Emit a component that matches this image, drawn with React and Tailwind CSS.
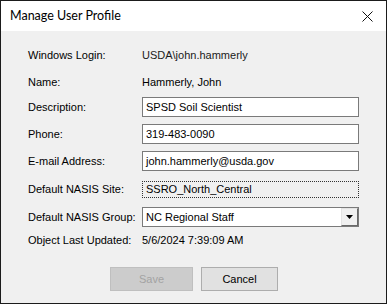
export default function App() {
  const label = 'w-[141px] shrink-0 pl-[27px] whitespace-nowrap'
  const input = 'flex-none w-[217px] h-[20px] border border-[#7a7a7a] bg-white px-[3px] flex items-center whitespace-nowrap'

  return (
    <div className="w-[387px] h-[304px] border border-[#1b1b1b] bg-[#f0f0f0] flex flex-col text-[11px] text-black font-['Liberation_Sans',Arial,sans-serif] leading-none">
      {/* title bar */}
      <div className="h-[30px] bg-white flex items-center justify-between pl-[9px] pr-[13px] shrink-0">
        <span className="text-[12.5px] font-['Lato','Noto_Sans',sans-serif] text-black">Manage User Profile</span>
        <svg width="11" height="11" viewBox="0 0 11 11" className="mt-[1px]">
          <path d="M0.5 0.5 L10.5 10.5 M10.5 0.5 L0.5 10.5" stroke="#111" strokeWidth="1" fill="none" />
        </svg>
      </div>

      <div className="flex flex-col">
        <div className="flex items-center h-[20px] mt-[14px]">
          <span className={label}>Windows Login:</span>
          <span className="text-[#1a1a1a]">USDA\john.hammerly</span>
        </div>
        <div className="flex items-center h-[20px] mt-[7px]">
          <span className={label}>Name:</span>
          <span>Hammerly, John</span>
        </div>
        <div className="flex items-center h-[20px] mt-[5px]">
          <span className={label}>Description:</span>
          <div className={input}>SPSD Soil Scientist</div>
        </div>
        <div className="flex items-center h-[20px] mt-[7px]">
          <span className={label}>Phone:</span>
          <div className={input}>319-483-0090</div>
        </div>
        <div className="flex items-center h-[20px] mt-[7px]">
          <span className={label}>E-mail Address:</span>
          <div className={input}>john.hammerly@usda.gov</div>
        </div>
        <div className="flex items-center h-[18px] mt-[9px]">
          <span className={label}>Default NASIS Site:</span>
          <div className="flex-none w-[217px] h-[17px] border border-dotted border-[#333] px-[3px] flex items-center">
            SSRO_North_Central
          </div>
        </div>
        <div className="flex items-center h-[20px] mt-[9px]">
          <span className={label}>Default NASIS Group:</span>
          <div className="flex-none w-[217px] h-[20px] border border-[#7a7a7a] bg-white pl-[3px] flex items-center justify-between">
            <span>NC Regional Staff</span>
            <div className="w-[17px] h-[18px] bg-[#f0f0f0] border-t border-l border-t-[#e3e3e3] border-l-[#e3e3e3] border-r border-b border-r-[#696969] border-b-[#696969] flex items-center justify-center">
              <svg width="7" height="4" viewBox="0 0 7 4">
                <path d="M0 0 H7 L3.5 4 Z" fill="#000" />
              </svg>
            </div>
          </div>
        </div>
        <div className="flex items-center h-[16px] mt-[5px]">
          <span className={label}>Object Last Updated:</span>
          <span>5/6/2024 7:39:09 AM</span>
        </div>

        <div className="flex mt-[19px] pl-[109px] gap-[8px]">
          <button className="w-[83px] h-[24px] bg-[#cccccc] border border-[#bfbfbf] text-[#a3a3a3] text-[11px]">Save</button>
          <button className="w-[77px] h-[24px] bg-[#e1e1e1] border border-[#adadad] text-black text-[11px]">Cancel</button>
        </div>
      </div>
    </div>
  )
}
